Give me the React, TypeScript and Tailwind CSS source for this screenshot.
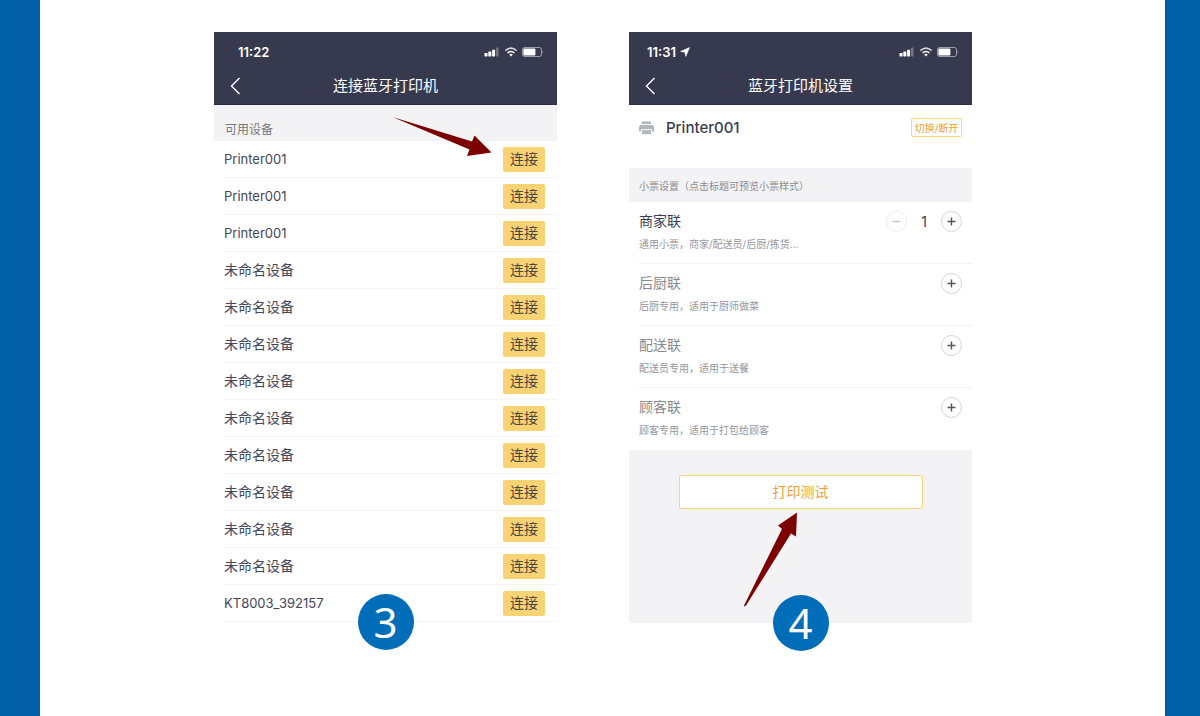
import type { ReactNode } from "react";

interface Device {
  name: string;
  named: boolean;
}

interface Receipt {
  title: string;
  note: string;
  count: number;
}

const devices: Device[] = [
  { name: "Printer001", named: true },
  { name: "Printer001", named: true },
  { name: "Printer001", named: true },
  { name: "未命名设备", named: false },
  { name: "未命名设备", named: false },
  { name: "未命名设备", named: false },
  { name: "未命名设备", named: false },
  { name: "未命名设备", named: false },
  { name: "未命名设备", named: false },
  { name: "未命名设备", named: false },
  { name: "未命名设备", named: false },
  { name: "未命名设备", named: false },
  { name: "KT8003_392157", named: true },
];

const receipts: Receipt[] = [
  { title: "商家联", note: "通用小票，商家/配送员/后厨/拣货...", count: 1 },
  { title: "后厨联", note: "后厨专用，适用于厨师做菜", count: 0 },
  { title: "配送联", note: "配送员专用，适用于送餐", count: 0 },
  { title: "顾客联", note: "顾客专用，适用于打包给顾客", count: 0 },
];

function StatusIcons() {
  return (
    <svg width="60" height="12" viewBox="0 0 60 12" aria-hidden="true">
      <g fill="#fff">
        <rect x="0.5" y="7" width="3" height="3.4" rx="0.6" />
        <rect x="4.3" y="5.6" width="3" height="4.8" rx="0.6" />
        <rect x="8.1" y="3.8" width="3" height="6.6" rx="0.6" />
        <rect x="12" y="1.6" width="2.6" height="8.8" rx="0.6" opacity="0.3" />
      </g>
      <g fill="none" stroke="#fff">
        <path d="M21.4 4.6 Q27 -0.4 32.6 4.6" strokeWidth="1.5" opacity="0.8" />
        <path d="M23.6 7 Q27 4 30.4 7" strokeWidth="1.6" />
      </g>
      <path d="M25.2 8.5 Q27 7.2 28.8 8.5 L27 10.5 Z" fill="#fff" />
      <rect x="38.5" y="1.5" width="19" height="9" rx="2" fill="none" stroke="#fff" opacity="0.5" />
      <rect x="39.4" y="2.4" width="12" height="7.2" rx="1" fill="#fff" />
      <path d="M58.6 4.5 Q60 6 58.6 7.5 Z" fill="#fff" opacity="0.5" />
    </svg>
  );
}

function PhoneHeader({ time, title, located }: { time: string; title: string; located?: boolean }) {
  return (
    <header className="border-b border-[#2b2e44] bg-[#373a4e] pb-1 text-white">
      <div className={`flex h-10 items-center justify-between pr-[13px] ${located ? "pl-[18px]" : "pl-6"}`}>
        <div className="flex items-center gap-1">
          <span className="text-[13px] leading-4 font-semibold">{time}</span>
          {located && (
            <svg width="10" height="10" viewBox="0 0 10 10" aria-hidden="true">
              <path d="M9.5 0.6 L5.8 9.4 L5 5.2 L0.6 4.4 Z" fill="#fff" stroke="#fff" strokeWidth="0.6" strokeLinejoin="round" />
            </svg>
          )}
        </div>
        <StatusIcons />
      </div>
      <div className="grid h-7 grid-cols-[44px_1fr_44px] items-center">
        <button type="button" aria-label="返回" className="flex h-7 items-center pl-4">
          <svg width="11" height="18" viewBox="0 0 11 18" aria-hidden="true">
            <path d="M9.5 1 L1.5 9 L9.5 17" fill="none" stroke="#fff" strokeWidth="1.4" />
          </svg>
        </button>
        <h2 className="text-center text-[15px] leading-5">{title}</h2>
      </div>
    </header>
  );
}

function StepBadge({ children }: { children: ReactNode }) {
  return (
    <div className="absolute -bottom-7 left-1/2 z-10 flex size-14 -translate-x-1/2 items-center justify-center rounded-full bg-[#006db9] font-['Noto_Sans',sans-serif] text-[42px] leading-none text-white">
      {children}
    </div>
  );
}

function RoundButton({ label, sign, faded }: { label: string; sign: "plus" | "minus"; faded?: boolean }) {
  return (
    <button
      type="button"
      aria-label={label}
      className={`flex size-[21px] items-center justify-center rounded-full border bg-white ${
        faded ? "border-[#efefef] text-[#c4c4c4]" : "border-[#d4d4d4] text-[#555]"
      }`}
    >
      <svg width="9" height="9" viewBox="0 0 9 9" aria-hidden="true">
        <path d={sign === "plus" ? "M0.5 4.5 H8.5 M4.5 0.5 V8.5" : "M0.5 4.5 H8.5"} stroke="currentColor" strokeWidth="1.4" />
      </svg>
    </button>
  );
}

function ConnectPhone() {
  return (
    <section className="relative w-[343px] bg-white">
      <PhoneHeader time="11:22" title="连接蓝牙打印机" />
      <h3 className="bg-[#f3f3f5] pt-[17px] pb-[3px] pl-[11px] text-[12px] leading-4 text-[#77777b]">可用设备</h3>
      <ul className="pl-2.5">
        {devices.map((device, i) => (
          <li key={i} className="flex h-[37px] items-center justify-between border-b border-[#f3f3f3] pr-3">
            <span className={`leading-5 text-[#44465a] ${device.named ? "text-[13px]" : "text-[14px]"}`}>
              {device.name}
            </span>
            <button type="button" className="h-[25px] w-[42px] rounded-xs bg-[#f8d374] text-[14px] leading-5 text-[#4a4640]">
              连接
            </button>
          </li>
        ))}
      </ul>
      <svg className="absolute top-[84px] left-[178px]" width="101" height="42" viewBox="0 0 101 42" aria-hidden="true">
        <path d="M0.5 1 L80 25.5 L82.5 19.5 L99.5 36.5 L75 40 L77.5 33.5 Z" fill="#7d0000" />
      </svg>
      <StepBadge>3</StepBadge>
    </section>
  );
}

function SettingsPhone() {
  return (
    <section className="relative w-[343px] bg-white">
      <PhoneHeader time="11:31" title="蓝牙打印机设置" located />
      <div className="flex h-[63px] items-start justify-between px-2.5 pt-[13px]">
        <div className="flex items-center gap-3">
          <svg width="15" height="14" viewBox="0 0 15 14" fill="#b3b7ba" aria-hidden="true">
            <rect x="3" y="0.5" width="9" height="2.6" />
            <path d="M1.5 4 H13.5 L15 5.5 V10.5 H13 V8.2 H2 V10.5 H0 V5.5 Z" />
            <rect x="3" y="9.2" width="9" height="4" />
          </svg>
          <span className="text-[15px] leading-5 font-medium text-[#3a3c50]">Printer001</span>
        </div>
        <button
          type="button"
          className="h-[19px] w-[51px] rounded-xs border border-[#fbd77c] text-[10px] leading-4 text-[#eda13a]"
        >
          切换/断开
        </button>
      </div>
      <h3 className="bg-[#f3f3f5] pt-2.5 pb-2 pl-2.5 text-[10px] leading-4 text-[#8c8c8e]">
        小票设置（点击标题可预览小票样式）
      </h3>
      <ul className="pl-2.5">
        {receipts.map((r) => (
          <li
            key={r.title}
            className="flex items-start justify-between border-b border-[#f3f3f3] pt-[9px] pr-2.5 pb-2.5 last:border-transparent"
          >
            <div>
              <p className={`text-[14px] leading-5 ${r.count > 0 ? "text-[#3a3c50]" : "text-[#8a8a8c]"}`}>{r.title}</p>
              <p className="mt-1 text-[10px] leading-[18px] text-[#96969e]">{r.note}</p>
            </div>
            <div className="flex items-center">
              {r.count > 0 && (
                <>
                  <RoundButton label={`减少${r.title}`} sign="minus" faded />
                  <span className="w-[34px] text-center text-[14px] leading-5 text-[#3a3c50]">{r.count}</span>
                </>
              )}
              <RoundButton label={`增加${r.title}`} sign="plus" />
            </div>
          </li>
        ))}
      </ul>
      <div className="flex justify-center bg-[#f3f3f5] pt-[25px] pb-[114px]">
        <button
          type="button"
          className="h-[34px] w-[244px] rounded-xs border border-[#fbd77c] bg-white text-[14px] leading-5 text-[#eda13a]"
        >
          打印测试
        </button>
      </div>
      <svg className="absolute top-[480px] left-[114px]" width="56" height="95" viewBox="0 0 56 95" aria-hidden="true">
        <path d="M1 93.5 L39 17 L35 13.5 L54 0.5 L53 24.5 L48 21.5 L3 93.5 L1.5 94.5 Z" fill="#7d0000" />
      </svg>
      <StepBadge>4</StepBadge>
    </section>
  );
}

export default function App() {
  return (
    <main className="min-h-screen border-r-[35px] border-l-[40px] border-[#005fa6] bg-white font-['Inter','Noto_Sans_CJK_SC',sans-serif]">
      <div className="flex flex-wrap items-start justify-center gap-[72px] pt-8 pr-[19px]">
        <ConnectPhone />
        <SettingsPhone />
      </div>
    </main>
  );
}
